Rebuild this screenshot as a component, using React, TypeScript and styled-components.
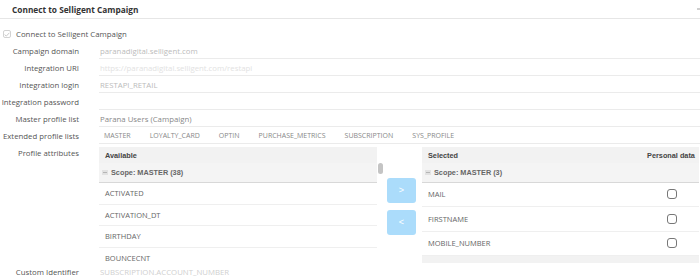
import React from "react";
import styled, { createGlobalStyle } from "styled-components";

const Global = createGlobalStyle`
  html, body { margin: 0; padding: 0; background: #fff; }
  body {
    font-family: "Open Sans", "DejaVu Sans", sans-serif;
    overflow: hidden;
    width: 700px;
    height: 277px;
  }
  * { box-sizing: border-box; }
`;

const Page = styled.div`
  width: 700px;
`;

const Header = styled.div`
  height: 19px;
  padding: 1px 0 0 12px;
  border-bottom: 1px solid #e6e6e6;
  display: flex;
  align-items: center;
  justify-content: space-between;
  font-size: 8.3px;
  font-weight: 700;
  color: #333;
`;

const CollapseMark = styled.span`
  width: 3px;
  height: 2px;
  background: #cfcfcf;
  margin-bottom: 1px;
`;

const CheckRow = styled.label`
  margin-top: 7px;
  height: 16px;
  display: flex;
  align-items: center;
  gap: 5px;
  padding-left: 3px;
  font-size: 7.8px;
  color: #555;
`;

const DisabledCheck = styled.span`
  width: 8px;
  height: 8px;
  border: 1px solid #d2d2d2;
  border-radius: 2px;
  display: flex;
  align-items: center;
  justify-content: center;
`;

const FormRow = styled.div<{ $h?: number }>`
  display: grid;
  grid-template-columns: 79px 1fr;
  column-gap: 20px;
  height: ${(p) => p.$h ?? 17}px;
`;

const Label = styled.div`
  text-align: right;
  white-space: nowrap;
  font-size: 7.8px;
  line-height: 16px;
  padding-top: 1px;
  color: #555;
`;

const Field = styled.div<{ $color?: string; $line?: boolean }>`
  border-bottom: ${(p) => (p.$line === false ? "none" : "1px solid #ebebeb")};
  font-size: 7.8px;
  line-height: 16px;
  padding: 1px 0 0 1px;
  color: ${(p) => p.$color ?? "#bbb"};
  white-space: nowrap;
  overflow: hidden;
`;

const Tabs = styled.div`
  border-bottom: 1px solid #ebebeb;
  display: flex;
  align-items: center;
  gap: 19px;
  padding: 1px 0 0 5px;
  font-size: 7px;
  color: #888;
  white-space: nowrap;
`;

const Lists = styled.div`
  display: flex;
  margin-top: 3px;
  height: 116px;
`;

const AvailableBox = styled.div`
  width: 278px;
  display: flex;
  flex-direction: column;
`;

const PanelHead = styled.div`
  height: 16px;
  flex: none;
  background: #f2f2f2;
  display: grid;
  grid-template-columns: 1fr 50px;
  align-items: center;
  padding: 0 3px 0 6px;
  font-family: "Liberation Sans", Arial, sans-serif;
  font-weight: 700;
  font-size: 7.3px;
  color: #444;
`;

const HeadCell = styled.span<{ $center?: boolean }>`
  text-align: ${(p) => (p.$center ? "center" : "left")};
  white-space: nowrap;
`;

const ScrollArea = styled.div`
  flex: 1;
  min-height: 0;
  overflow: hidden;
`;

const ScopeRow = styled.div`
  height: 20px;
  background: #f4f4f4;
  border-bottom: 1px solid #d8d8d8;
  display: flex;
  align-items: center;
  padding-left: 3px;
  gap: 3px;
  font-family: "Liberation Sans", Arial, sans-serif;
  font-weight: 700;
  font-size: 7.3px;
  color: #666;
`;

const Item = styled.div`
  height: 21.5px;
  border-bottom: 1px solid #efefef;
  display: flex;
  align-items: center;
  padding-left: 6px;
  font-size: 7.5px;
  color: #666;
`;

const Track = styled.div`
  width: 6px;
  padding: 16px 0 0 1px;
`;

const Thumb = styled.div`
  width: 4.5px;
  height: 10.5px;
  border-radius: 3px;
  background: #c4c4c4;
`;

const ButtonCol = styled.div`
  width: 29px;
  margin-left: 4px;
  padding-top: 31px;
  display: flex;
  flex-direction: column;
  gap: 7px;
`;

const MoveButton = styled.button`
  width: 29px;
  height: 25px;
  border: none;
  border-radius: 3px;
  background: #abdcfb;
  color: #fff;
  font-family: "Liberation Sans", Arial, sans-serif;
  font-size: 9px;
  line-height: 25px;
  padding: 0;
  display: flex;
  align-items: center;
  justify-content: center;
`;

const SelectedBox = styled.div`
  width: 277px;
  margin-left: 6px;
  display: flex;
  flex-direction: column;
`;

const SelRow = styled.div`
  height: 25px;
  border-bottom: 1px solid #efefef;
  display: grid;
  grid-template-columns: 1fr 50px;
  align-items: center;
  padding: 0 3px 0 6px;
  font-size: 7.5px;
  color: #666;
`;

const CheckCell = styled.div`
  display: flex;
  justify-content: center;
`;

const RoundCheck = styled.span`
  width: 10px;
  height: 10px;
  border: 1.3px solid #777;
  border-radius: 3px;
  margin-left: 1px;
`;

const Footer = styled.div`
  height: 7px;
  background: #f2f2f2;
`;

const MinusBox = () => (
  <svg width="6" height="5" viewBox="0 0 6 5">
    <rect width="6" height="5" fill="#e2e2e2" />
    <rect x="1" y="2" width="4" height="1" fill="#b5b5b5" />
  </svg>
);

const available = ["ACTIVATED", "ACTIVATION_DT", "BIRTHDAY", "BOUNCECNT"];
const selected = ["MAIL", "FIRSTNAME", "MOBILE_NUMBER"];
const tabs = ["MASTER", "LOYALTY_CARD", "OPTIN", "PURCHASE_METRICS", "SUBSCRIPTION", "SYS_PROFILE"];

export default function App() {
  return (
    <Page>
      <Global />
      <Header>
        <span>Connect to Selligent Campaign</span>
        <CollapseMark />
      </Header>
      <CheckRow>
        <DisabledCheck>
          <svg width="6" height="5" viewBox="0 0 6 5">
            <path d="M0.6 2.6 L2.3 4.1 L5.4 0.8" fill="none" stroke="#c9c9c9" strokeWidth="1" />
          </svg>
        </DisabledCheck>
        Connect to Selligent Campaign
      </CheckRow>
      <FormRow>
        <Label>Campaign domain</Label>
        <Field>paranadigital.selligent.com</Field>
      </FormRow>
      <FormRow>
        <Label>Integration URI</Label>
        <Field $color="#e2e2e2">https://paranadigital.selligent.com/restapi</Field>
      </FormRow>
      <FormRow>
        <Label>Integration login</Label>
        <Field>RESTAPI_RETAIL</Field>
      </FormRow>
      <FormRow>
        <Label>Integration password</Label>
        <Field />
      </FormRow>
      <FormRow>
        <Label>Master profile list</Label>
        <Field $color="#888">Parana Users (Campaign)</Field>
      </FormRow>
      <FormRow>
        <Label>Extended profile lists</Label>
        <Tabs>
          {tabs.map((t) => (
            <span key={t}>{t}</span>
          ))}
        </Tabs>
      </FormRow>
      <FormRow $h={119}>
        <Label>Profile attributes</Label>
        <Lists>
          <AvailableBox>
            <PanelHead>
              <HeadCell>Available</HeadCell>
            </PanelHead>
            <ScrollArea>
              <ScopeRow>
                <MinusBox />
                Scope: MASTER (38)
              </ScopeRow>
              {available.map((a) => (
                <Item key={a}>{a}</Item>
              ))}
            </ScrollArea>
          </AvailableBox>
          <Track>
            <Thumb />
          </Track>
          <ButtonCol>
            <MoveButton>&gt;</MoveButton>
            <MoveButton>&lt;</MoveButton>
          </ButtonCol>
          <SelectedBox>
            <PanelHead>
              <HeadCell>Selected</HeadCell>
              <HeadCell $center>Personal data</HeadCell>
            </PanelHead>
            <ScopeRow>
              <MinusBox />
              Scope: MASTER (3)
            </ScopeRow>
            {selected.map((s) => (
              <SelRow key={s}>
                <span>{s}</span>
                <CheckCell>
                  <RoundCheck />
                </CheckCell>
              </SelRow>
            ))}
            <Footer />
          </SelectedBox>
        </Lists>
      </FormRow>
      <FormRow>
        <Label>Custom Identifier</Label>
        <Field $color="#cfcfcf" $line={false}>
          SUBSCRIPTION.ACCOUNT_NUMBER
        </Field>
      </FormRow>
    </Page>
  );
}
